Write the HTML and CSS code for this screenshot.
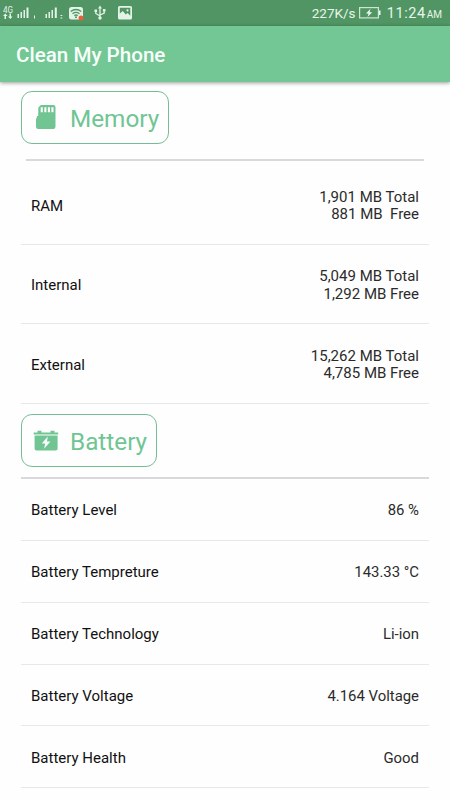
FILE: index.html
```html
<!DOCTYPE html>
<html lang="en">
<head>
<meta charset="utf-8">
<title>Clean My Phone</title>
<link rel="stylesheet" href="styles.css">
</head>
<body>
<header class="status">
  <svg class="status-icons" width="140" height="26" viewBox="0 0 140 26" fill="#e4f3e7">
    <text class="net" x="3" y="12.5" textLength="10" lengthAdjust="spacingAndGlyphs">4G</text>
    <path d="M3 16l2.300-2.500L7.600 16H6v3H4.500v-3zM8 16.500h1.500v-3H11v3h1.600L10.300 19z"/>
    <path d="M17.500 14h1.500v4h-1.500zM20.500 12h1.500v6h-1.500zM23.500 10h1.500v8h-1.500zM26.500 7.500h2v10.500h-2zM34 15.500h1v3h-1z"/>
    <path d="M45.500 14h1.500v4h-1.500zM48.500 12h1.500v6h-1.500zM51.500 10h1.500v8h-1.500zM54.800 7.500h2v10.500h-2zM60.500 15h1.800v1h-1.800zM60.500 17.500h1.800v1h-1.800z"/>
    <rect x="69" y="7" width="14" height="12.500" rx="2.500"/>
    <g fill="none" stroke="#509563" stroke-width="1.300"><path d="M70.700 11.500q5.300-4 10.600 0M72.500 13.700q3.500-2.500 7 0M74.300 15.600q1.700-1.200 3.400 0"/></g>
    <circle cx="76" cy="17.300" r="1" fill="#509563"/>
    <circle cx="81" cy="18" r="2.500" fill="#e8603c"/>
    <g fill="none" stroke="#e4f3e7" stroke-width="1.300"><path d="M100 8v10M95.800 11v2.500l4.200 2.500M104.200 10.500v2.500l-4.200 2"/></g>
    <path d="M100 5.500l2 3h-4zM94.500 9.500h2.600v2.600h-2.600zM102.900 9h2.600v2.600h-2.600z"/><circle cx="100" cy="18" r="1.700"/>
    <path fill-rule="evenodd" d="M119.500 6h11q1.500 0 1.500 1.500v10.500q0 1.500-1.500 1.500h-11q-1.500 0-1.500-1.500V7.500q0-1.500 1.500-1.500zM119.800 7.800v5.800l3-2.600 3 3.500 1.800-1.500 2.700 2.800V7.800z"/>
    <circle cx="127.500" cy="10.300" r="1.100"/>
  </svg>
  <div class="status-right">
    <span class="speed">227K/s</span>
    <svg class="charge" width="22" height="12" viewBox="0 0 22 12"><rect x=".6" y=".6" width="18.800" height="10.300" fill="none" stroke="#cfe5d4" stroke-width="1.200"/><path d="M20 3.500h1.500v4.500H20zM11.500 1.800L7 6.400h2.600L8.500 10l4.700-4.800h-2.700z" fill="#f2faf3"/></svg>
    <span class="clock">11:24</span><span class="ampm">AM</span>
  </div>
</header>
<div class="appbar"><h1>Clean My Phone</h1></div>
<main>
  <section>
    <h2 class="badge">
      <svg width="26" height="26" viewBox="0 0 26 26"><path fill="#70c593" fill-rule="evenodd" d="M8 0h12.300q2.200 0 2.200 2.200v19.600q0 2.200-2.200 2.200H5.200Q3 24 3 21.800v-7.300q0-1.200.9-2V11h1.300l.1-7.700Q5.300 2.500 6 1.800zM7.700 2.200v5h2.100v-5zm3.600 0v5h2.100v-5zm3.600 0v5H17v-5zm3.500 0v5h2.100v-5z"/></svg>
      <span>Memory</span>
    </h2>
    <hr class="rule memory-rule">
    <ul class="list memory-list">
      <li><span>RAM</span><b>1,901 MB Total<br>881 MB&nbsp; Free</b></li>
      <li><span>Internal</span><b>5,049 MB Total<br>1,292 MB Free</b></li>
      <li><span>External</span><b>15,262 MB Total<br>4,785 MB Free</b></li>
    </ul>
  </section>
  <section class="battery">
    <h2 class="badge">
      <svg width="26" height="26" viewBox="0 0 26 26"><path fill="#70c593" fill-rule="evenodd" d="M4.500 2.700h4v1.700h9V2.700h4v1.700h3.700v2H.7v-2h3.800zM1.600 7.500h23v13.200q0 1.800-1.800 1.800H3.400q-1.800 0-1.800-1.800zM14.800 8.500l-6 7h3.400l-1.100 5.200 6.300-7.100H14z"/></svg>
      <span>Battery</span>
    </h2>
    <hr class="rule">
    <ul class="list">
      <li><span>Battery Level</span><b>86 %</b></li>
      <li><span>Battery Tempreture</span><b>143.33 °C</b></li>
      <li><span>Battery Technology</span><b>Li-ion</b></li>
      <li><span>Battery Voltage</span><b>4.164 Voltage</b></li>
      <li><span>Battery Health</span><b>Good</b></li>
    </ul>
  </section>
</main>
</body>
</html>
```
FILE: styles.css
```css
* { box-sizing: border-box; }
body {
  margin: 0;
  width: 450px;
  height: 800px;
  overflow: hidden;
  background: #fefefe;
  font-family: Roboto, "Liberation Sans", sans-serif;
}
.status {
  display: flex;
  justify-content: space-between;
  height: 26px;
  background: #509563;
  color: #e8f5ea;
}
.status-icons, .charge { display: block; }
.net { font-size: 9px; }
.status-right {
  display: flex;
  align-items: baseline;
  padding: 5px 8px 0 0;
  line-height: 17px;
}
.speed { font-size: 13.5px; width: 43px; margin-right: 4px; }
.charge { align-self: flex-start; margin: 2px 6px 0 0; }
.clock { font-size: 14.5px; width: 40px; letter-spacing: .55px; }
.ampm { font-size: 10px; }
.appbar {
  display: flex;
  align-items: center;
  height: 56px;
  padding: 1px 0 0 16px;
  background: #73c795;
  box-shadow: 0 1px 4px rgba(0, 0, 0, .4);
}
h1 {
  margin: 0;
  color: #f8fffa;
  font-size: 20.6px;
  font-weight: 500;
  line-height: 24px;
}
main { padding: 9px 21px 0; }
.badge {
  display: flex;
  align-items: center;
  gap: 11px;
  width: max-content;
  height: 53px;
  margin: 0;
  padding: 1px 9px 0 11px;
  border: 1.5px solid #76bd96;
  border-radius: 11px;
  color: #70c593;
  font-size: 24.3px;
  font-weight: 400;
}
.badge span { padding-top: 1px; }
.rule {
  height: 2px;
  margin: 10px 0 0;
  border: 0;
  background: #d9d9dc;
}
.memory-rule { margin: 15px 5px 4px; }
.list { margin: 0; padding: 0; list-style: none; }
.list li {
  display: flex;
  justify-content: space-between;
  align-items: center;
  height: 61.8px;
  padding: 3px 10px 0;
  border-bottom: 1px solid #e8e8e8;
  color: #111;
  font-size: 15px;
  line-height: 17.5px;
}
.memory-list li { height: 79.5px; }
.list b { color: #2b2b2b; font-weight: 400; text-align: right; }
.memory-list b { padding-top: 1px; }
.memory-list span { padding-top: 1px; }
.battery { padding-top: 10px; }
.battery .list { padding-top: .8px; }
.battery .list b { font-size: 14.9px; }
```
